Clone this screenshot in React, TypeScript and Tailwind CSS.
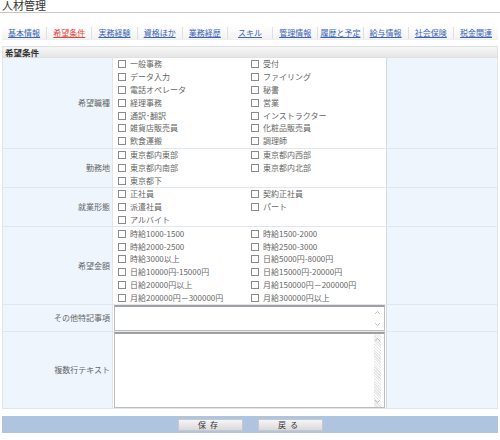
import React from "react";

const tabs = ["基本情報", "希望条件", "実務経験", "資格ほか", "業務経歴", "スキル", "管理情報", "履歴と予定", "給与情報", "社会保険", "税金関連"];

const Box = () => (
  <span className="inline-block w-[8px] h-[8px] border border-[#8a8a8a] bg-white mr-[4px] shrink-0" />
);

function Checks({ items }: { items: string[] }) {
  return (
    <div className="grid grid-cols-[133px_133px] pl-[5px]">
      {items.map((t, i) => (
        <div key={i} className="h-[12.8px] flex items-center text-[8px] text-[#666] whitespace-nowrap">
          {t ? <><Box />{t}</> : null}
        </div>
      ))}
    </div>
  );
}

function Row({ label, children }: { label: string; children: React.ReactNode }) {
  return (
    <div className="flex border-b border-[#dfe6ee]">
      <div className="w-[110px] bg-[#eef5fd] flex items-center justify-end pr-[2px] text-[8px] text-[#666] border-r border-[#dfe6ee]">{label}</div>
      <div className="w-[274px] bg-white border-r border-[#d4dbe3]">{children}</div>
      <div className="flex-1 bg-[#eef5fd]" />
    </div>
  );
}

const Chev = ({ up }: { up?: boolean }) => (
  <svg width="7" height="5" viewBox="0 0 7 5" className="block">
    <path d={up ? "M1 4 L3.5 1.5 L6 4" : "M1 1 L3.5 3.5 L6 1"} fill="none" stroke="#bbb" strokeWidth="0.9" />
  </svg>
);

function TextBox({ h, track }: { h: number; track?: boolean }) {
  return (
    <div className="flex border border-[#bdbdbd] border-t-[2px] border-t-[#a0a0a0] bg-white mx-[1px]" style={{ height: h }}>
      <div className="flex-1" />
      <div className={"w-[7px] flex flex-col justify-between items-center py-[3px] " + (track ? "bg-[repeating-linear-gradient(45deg,#e6e6e6_0px,#e6e6e6_1px,#fafafa_1px,#fafafa_2px)]" : "")}>
        <Chev up />
        <Chev />
      </div>
      <div className="w-[3px]" />
    </div>
  );
}

export default function App() {
  return (
    <div className="w-[500px] h-[440px] bg-white overflow-hidden font-['Noto_Sans_CJK_JP',sans-serif] relative">
      <div className="h-[12px] flex items-end pl-[2px] text-[11px] leading-[12px] text-[#333] border-b border-[#c8c8c8] -mt-[1px] pb-[1px] box-content">人材管理</div>
      <div className="mt-[13px] mx-[2px] h-[14px] flex items-center bg-gradient-to-b from-white to-[#f3f3f3] border-b border-[#eeeeee]">
        {tabs.map((t, i) => (
          <div key={i} className={"flex-1 flex justify-center items-center h-[12px] text-[8px] underline " + (i > 0 ? "border-l border-[#e0e0e0] " : "") + (i === 1 ? "text-[#e0453a]" : "text-[#3a63b5]")}>
            {t}
          </div>
        ))}
      </div>
      <div className="mt-[6px] mx-[2px] h-[12px] flex items-center pl-[2px] bg-gradient-to-b from-[#f7f7f7] to-[#e6e6e6] border border-[#e0e0e0] text-[8.5px] font-bold text-[#333]">希望条件</div>
      <div className="mx-[2px] border-l border-r border-[#dfe6ee]">
        <Row label="希望職種">
          <Checks items={["一般事務", "受付", "データ入力", "ファイリング", "電話オペレータ", "秘書", "経理事務", "営業", "通訳･翻訳", "インストラクター", "雑貨店販売員", "化粧品販売員", "飲食運搬", "調理師"]} />
        </Row>
        <Row label="勤務地">
          <Checks items={["東京都内東部", "東京都内西部", "東京都内南部", "東京都内北部", "東京都下", ""]} />
        </Row>
        <Row label="就業形態">
          <Checks items={["正社員", "契約正社員", "派遣社員", "パート", "アルバイト", ""]} />
        </Row>
        <Row label="希望金額">
          <Checks items={["時給1000-1500", "時給1500-2000", "時給2000-2500", "時給2500-3000", "時給3000以上", "日給5000円-8000円", "日給10000円-15000円", "日給15000円-20000円", "日給20000円以上", "月給150000円－200000円", "月給200000円－300000円", "月給300000円以上"]} />
        </Row>
        <Row label="その他特記事項">
          <TextBox h={26} />
        </Row>
        <Row label="複数行テキスト">
          <TextBox h={76} track />
        </Row>
      </div>
      <div className="mt-[7px] mx-[2px] h-[17px] bg-[#afc5df] flex items-center justify-center gap-[15px]">
        <div className="w-[65px] h-[12px] bg-gradient-to-b from-[#f5f5f5] to-[#dadada] border border-[#c8c8c8] flex items-center justify-center text-[8px] text-[#333] tracking-[4px]">保存</div>
        <div className="w-[65px] h-[12px] bg-gradient-to-b from-[#f5f5f5] to-[#dadada] border border-[#c8c8c8] flex items-center justify-center text-[8px] text-[#333] tracking-[4px]">戻る</div>
      </div>
    </div>
  );
}
